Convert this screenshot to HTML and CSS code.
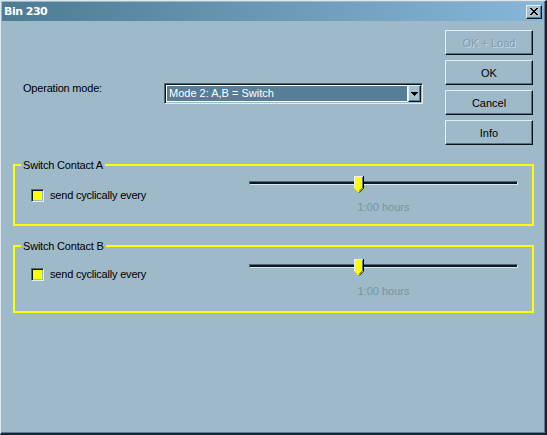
FILE: index.html
```html
<!DOCTYPE html>
<html>
<head>
<meta charset="utf-8">
<title>Bin 230</title>
<link rel="stylesheet" href="styles.css">
</head>
<body>
<div class="window">
  <div class="titlebar">
    <span class="title">Bin 230</span>
    <button class="close" aria-label="Close">
      <svg width="8" height="7" viewBox="0 0 8 7" shape-rendering="crispEdges"><path fill="#000" d="M0 0h2v1H0zM6 0h2v1H6zM1 1h2v1H1zM5 1h2v1H5zM2 2h4v1H2zM3 3h2v1H3zM2 4h4v1H2zM1 5h2v1H1zM5 5h2v1H5zM0 6h2v1H0zM6 6h2v1H6z"/></svg>
    </button>
  </div>
  <div class="body">
    <div class="top">
      <div class="mode">
        <span class="mode-label">Operation mode:</span>
        <div class="select">
          <div class="select-value">Mode 2: A,B = Switch</div>
          <div class="select-arrow">
            <svg width="7" height="4" viewBox="0 0 7 4" shape-rendering="crispEdges"><path fill="#000" d="M0 0h7v1H0zM1 1h5v1H1zM2 2h3v1H2zM3 3h1v1H3z"/></svg>
          </div>
        </div>
      </div>
      <div class="buttons">
        <button class="btn btn-disabled">OK + Load</button>
        <button class="btn">OK</button>
        <button class="btn">Cancel</button>
        <button class="btn">Info</button>
      </div>
    </div>

    <fieldset class="group group-a">
      <legend>Switch Contact A</legend>
      <div class="group-row">
        <label class="check"><span class="box"></span>send cyclically every</label>
        <div class="slider">
          <div class="track"></div>
          <svg class="thumb" width="10" height="17" viewBox="0 0 10 17"><polygon points="0,0 10,0 10,12 5,17 0,12" fill="#ffff00"/><path d="M0.5 12V0.5H9" fill="none" stroke="#e8f0f4"/><path d="M9.5 0V12.2L5 16.7" fill="none" stroke="#000"/><path d="M8.5 1V11.8L5 15.2" fill="none" stroke="#5b7788"/></svg>
          <div class="value">1:00 hours</div>
        </div>
      </div>
    </fieldset>

    <fieldset class="group group-b">
      <legend>Switch Contact B</legend>
      <div class="group-row">
        <label class="check"><span class="box"></span>send cyclically every</label>
        <div class="slider">
          <div class="track"></div>
          <svg class="thumb" width="10" height="17" viewBox="0 0 10 17"><polygon points="0,0 10,0 10,12 5,17 0,12" fill="#ffff00"/><path d="M0.5 12V0.5H9" fill="none" stroke="#e8f0f4"/><path d="M9.5 0V12.2L5 16.7" fill="none" stroke="#000"/><path d="M8.5 1V11.8L5 15.2" fill="none" stroke="#5b7788"/></svg>
          <div class="value">1:00 hours</div>
        </div>
      </div>
    </fieldset>
  </div>
</div>
</body>
</html>
```

FILE: styles.css
```css
html, body {
  margin: 0;
  padding: 0;
  background: #9eb9c7;
}

body {
  font-family: "Liberation Sans", Arial, sans-serif;
  font-size: 11px;
  line-height: 13px;
  color: #000;
}

.window {
  box-sizing: border-box;
  width: 547px;
  height: 435px;
  padding: 1px;
  background: #9eb9c7;
  border-left: 1px solid #dde8ee;
  border-top: 1px solid #dde8ee;
  border-right: 2px solid #10263a;
  border-bottom: 2px solid #10263a;
  box-shadow: inset -1px -1px 0 #5d7a8c;
}

.titlebar {
  height: 19px;
  display: flex;
  align-items: center;
  background: linear-gradient(to right, #4c7c92, #87b7d9);
}

.title {
  flex: 1;
  padding-left: 2px;
  color: #fff;
  font-family: "DejaVu Sans", sans-serif;
  font-weight: bold;
  font-size: 11px;
  letter-spacing: -0.5px;
  line-height: 19px;
}

.close {
  box-sizing: border-box;
  width: 16px;
  height: 14px;
  margin: 0 2px 0 0;
  padding: 0;
  display: flex;
  align-items: center;
  justify-content: center;
  background: #a5c1d1;
  border: 1px solid;
  border-color: #e6eef3 #0c1a26 #0c1a26 #e6eef3;
  box-shadow: inset -1px -1px 0 #5e7b8c;
}

.body {
  padding: 0 10px 0 11px;
}

.top {
  display: flex;
  height: 124px;
}

.mode {
  flex: 1;
  display: flex;
  align-items: flex-start;
  margin-top: 62px;
  padding-left: 10px;
}

.mode-label {
  width: 141px;
  margin-top: -1px;
  letter-spacing: -0.2px;
}

.select {
  box-sizing: border-box;
  width: 259px;
  height: 21px;
  display: flex;
  border: 1px solid;
  border-color: #4b6676 #e2ebf0 #e2ebf0 #4b6676;
  box-shadow: inset 1px 1px 0 #0a1620;
  padding: 1px;
  background: #9eb9c7;
}

.select-value {
  flex: 1;
  box-sizing: border-box;
  background: #567e96;
  border: 1px solid #ffffff;
  color: #fff;
  padding-left: 2px;
  line-height: 15px;
  white-space: nowrap;
}

.select-arrow {
  box-sizing: border-box;
  width: 13px;
  display: flex;
  align-items: center;
  justify-content: center;
  background: #a5c1d1;
  border: 1px solid;
  border-color: #e6eef3 #0c1a26 #0c1a26 #e6eef3;
  box-shadow: inset -1px -1px 0 #5e7b8c;
}

.buttons {
  width: 88px;
  margin: 9px 1px 0 0;
  display: flex;
  flex-direction: column;
  gap: 5px;
}

.btn {
  box-sizing: border-box;
  height: 25px;
  padding: 0;
  font-family: "Liberation Sans", Arial, sans-serif;
  font-size: 11px;
  color: #000;
  background: #9eb9c7;
  border: 1px solid;
  border-color: #e4edf2 #08131c #08131c #e4edf2;
  box-shadow: inset -1px -1px 0 #56717f;
}

.btn-disabled {
  color: #7f9bac;
  text-shadow: 1px 1px 0 #c7d8e2;
}

.group {
  box-sizing: border-box;
  margin: 13px 0 0 0;
  padding: 0;
  min-width: 0;
  border: 2px solid #ffff00;
}

.group legend {
  margin-left: 6px;
  padding: 0 2px;
  line-height: 14px;
  letter-spacing: -0.2px;
}

.group-a {
  height: 68px;
}

.group-b {
  height: 74px;
}

.group-row {
  display: flex;
  align-items: flex-start;
  justify-content: space-between;
  padding: 0 14px 0 16px;
}

.check {
  display: flex;
  align-items: center;
  gap: 6px;
  margin-top: 17px;
  letter-spacing: -0.2px;
}

.group-b .check {
  margin-top: 15px;
}

.box {
  box-sizing: border-box;
  width: 13px;
  height: 13px;
  background: #ffff00;
  border: 1px solid;
  border-color: #50697a #e3ecf1 #e3ecf1 #50697a;
  box-shadow: inset 1px 1px 0 #0a1620, inset -1px -1px 0 #9eb9c7;
}

.slider {
  position: relative;
  width: 269px;
  margin-top: 4px;
  padding-top: 5px;
}

.group-b .slider {
  margin-top: 6px;
}

.track {
  box-sizing: border-box;
  height: 4px;
  background: #0d1a25;
  border: 1px solid;
  border-color: #4d6979 #dce6ec #dce6ec #4d6979;
}

.thumb {
  position: absolute;
  left: 105px;
  top: 0;
  display: block;
}

.value {
  margin-top: 16px;
  text-align: center;
  color: #7693a4;
}

.group-b .value {
  margin-top: 17px;
}
```
